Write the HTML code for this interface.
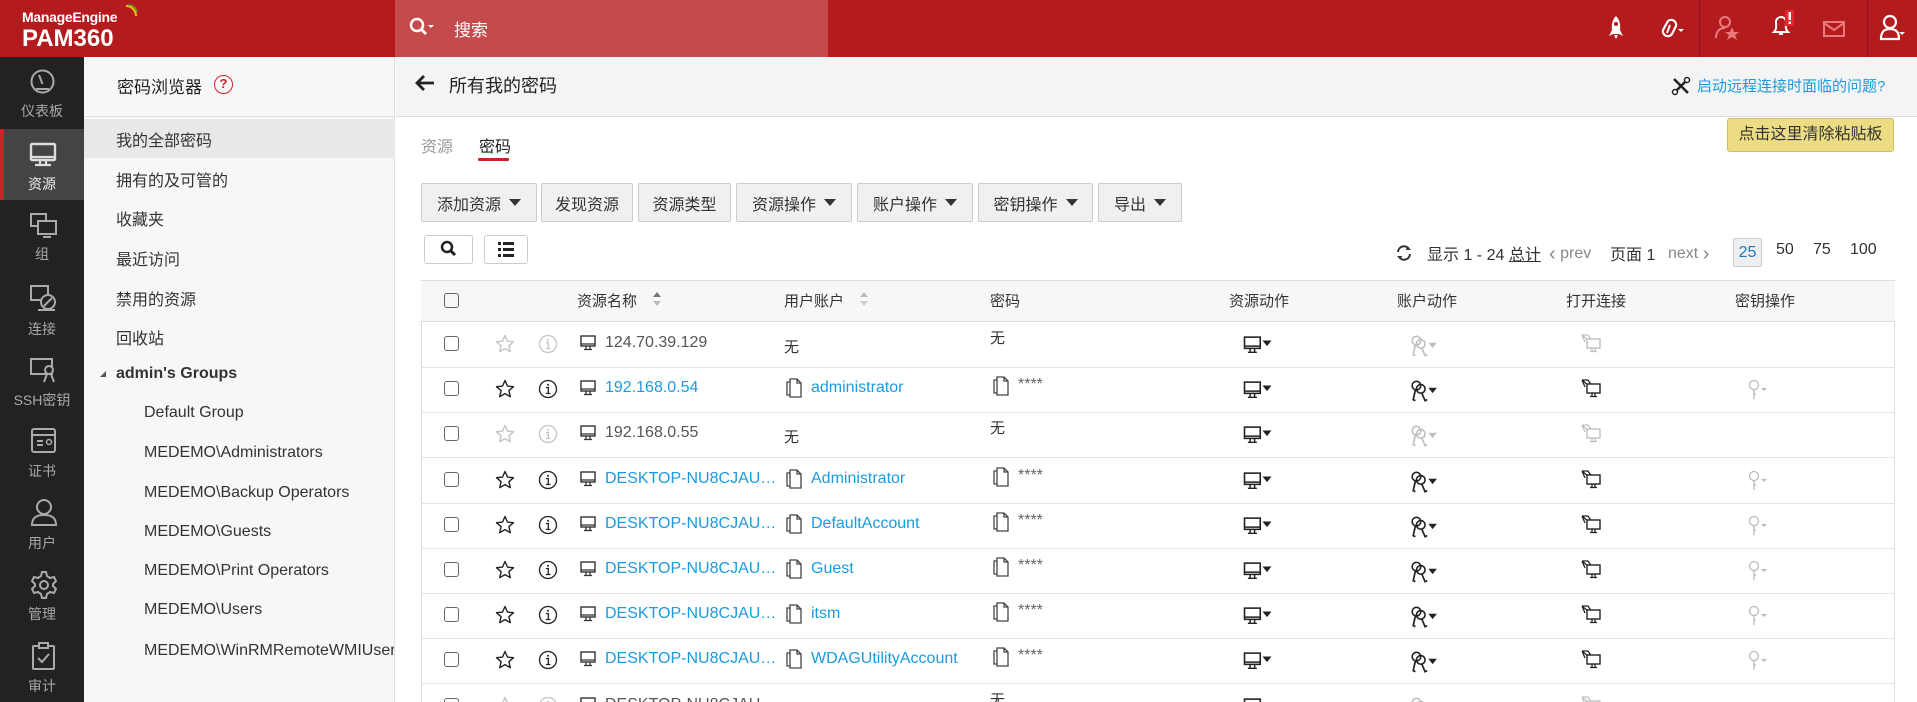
<!DOCTYPE html>
<html style="width:1917px;height:702px;overflow:hidden"><head><meta charset="utf-8">
<style>
*{margin:0;padding:0;box-sizing:border-box}
html,body{overflow:hidden}
body{width:1917px;height:702px;overflow:hidden;position:relative;background:#fff;font-family:"Liberation Sans","Noto Sans CJK SC",sans-serif;color:#333;font-size:16px}
.a{position:absolute;white-space:nowrap}
.hdr{left:0;top:0;width:1917px;height:57px;background:#b41b1e}
.rail{left:0;top:57px;width:84px;height:645px;background:#222}
.nav{left:84px;top:57px;width:311px;height:645px;background:#f7f7f7;border-right:1px solid #ddd}
.rl{color:#a8a8a8;font-size:14px;width:84px;text-align:center;left:0}
.ni{left:116px;font-size:16px;color:#333}
.gi{left:144px;font-size:16px;color:#333}
.btn{top:183px;height:39px;background:#f0f0f0;border:1px solid #ccc;border-radius:2px;font-size:16px;color:#333;display:flex;align-items:center;justify-content:center;gap:8px}
.tri{width:0;height:0;border-left:6px solid transparent;border-right:6px solid transparent;border-top:7px solid #333;display:inline-block}
.th{top:290px;font-size:15px;color:#333}
.link{color:#1a9be0}
.cb{width:15px;height:15px;border:1px solid #666;border-radius:3px;left:444px}
.hl{left:421px;width:1474px;height:1px;background:#e4e4e4}
</style></head><body>
<div style="position:absolute;left:0;top:0;width:1917px;height:702px;overflow:hidden">
<!-- header -->
<div class="a hdr"></div>
<div class="a" style="left:22px;top:9px;color:#fff;font-size:14px;font-weight:bold;letter-spacing:-0.3px">ManageEngine</div>
<svg class="a" style="left:124px;top:4px" width="14" height="14"><path d="M2 2 A10 10 0 0 1 12 12" stroke="#f5c400" stroke-width="2" fill="none"/><path d="M4 1 A9 9 0 0 1 13 8" stroke="#5aa02c" stroke-width="1.5" fill="none"/></svg>
<div class="a" style="left:22px;top:25px;color:#fff;font-size:24px;font-weight:bold">PAM360</div>
<div class="a" style="left:395px;top:0;width:433px;height:57px;background:#c54a4c"></div>
<svg class="a" style="left:409px;top:17px" width="26" height="22"><circle cx="8" cy="8" r="6" stroke="#fff" stroke-width="2.5" fill="none"/><path d="M12 12 L17 17" stroke="#fff" stroke-width="3"/><path d="M19 8 h6 l-3 3z" fill="#fff"/></svg>
<div class="a" style="left:454px;top:16px;color:#fff;font-size:17px">搜索</div>
<svg class="a" style="left:1606px;top:15px" width="20" height="26"><path d="M10 1 C15 6 15 14 13 19 H7 C5 14 5 6 10 1z" fill="#fff"/><circle cx="10" cy="9" r="2" fill="#b41b1e"/><path d="M6 15 L3 21 L7 19z M14 15 L17 21 L13 19z" fill="#fff"/><path d="M8 20 h4 l-2 4z" fill="#fff"/></svg>
<svg class="a" style="left:1658px;top:15px" width="28" height="28"><path d="M10 6 a5 5 0 0 1 8 5 l-4 8 a5 5 0 0 1-9-4z" stroke="#fff" stroke-width="2.2" fill="none"/><path d="M12 10 l-3 8" stroke="#fff" stroke-width="2"/><path d="M20 14 h6 l-3 3z" fill="#fff"/></svg>
<div class="a" style="left:1699px;top:0;width:1px;height:57px;background:#8e1416"></div>
<svg class="a" style="left:1714px;top:14px" width="26" height="28"><circle cx="11" cy="8" r="5" stroke="#e97a7b" stroke-width="2" fill="none"/><path d="M2 24 c0-7 4-10 9-10" stroke="#e97a7b" stroke-width="2" fill="none"/><path d="M18 13 l2 5 5 0-4 3 2 5-5-3-5 3 2-5-4-3 5 0z" fill="#e97a7b"/></svg>
<svg class="a" style="left:1770px;top:10px" width="26" height="30"><path d="M4 22 c3-3 2-6 2-10 a5 5 0 0 1 10 0 c0 4-1 7 2 10z" stroke="#fff" stroke-width="2" fill="none"/><path d="M9 24 h4" stroke="#fff" stroke-width="2"/><rect x="15" y="0" width="9" height="16" fill="#e8262a"/><rect x="18.5" y="2" width="2.5" height="8" fill="#fff"/><rect x="18.5" y="11.5" width="2.5" height="2.5" fill="#fff"/></svg>
<svg class="a" style="left:1823px;top:21px" width="22" height="16"><rect x="1" y="1" width="20" height="14" stroke="#e97a7b" stroke-width="2" fill="none"/><path d="M1 2 L11 9 L21 2" stroke="#e97a7b" stroke-width="2" fill="none"/></svg>
<div class="a" style="left:1867px;top:0;width:1px;height:57px;background:#8e1416"></div>
<svg class="a" style="left:1879px;top:14px" width="28" height="28"><circle cx="11" cy="8" r="6" stroke="#fff" stroke-width="2.2" fill="none"/><path d="M2 25 c0-7 3-10 9-10 s9 3 9 10z" stroke="#fff" stroke-width="2.2" fill="none"/><path d="M20 18 h6 l-3 3z" fill="#fff"/></svg>

<!-- rail -->
<div class="a rail"></div>
<div class="a" style="left:0;top:129px;width:84px;height:71px;background:#444"></div>
<div class="a" style="left:0;top:129px;width:4px;height:71px;background:#c8252a"></div>
<svg class="a" style="left:29px;top:68px" width="27" height="27"><circle cx="13.5" cy="13.5" r="11" stroke="#aaa" stroke-width="2" fill="none"/><path d="M10 7 L13.5 16" stroke="#aaa" stroke-width="2"/><path d="M7 21 h13" stroke="#aaa" stroke-width="2"/></svg>
<div class="a rl" style="top:101px">仪表板</div>
<svg class="a" style="left:29px;top:142px" width="28" height="26"><rect x="2" y="2" width="24" height="16" rx="1" stroke="#ddd" stroke-width="2.4" fill="none"/><path d="M2 15 h24 M11 18 v4 M17 18 v4 M6 23 h16" stroke="#ddd" stroke-width="2.2"/></svg>
<div class="a rl" style="top:174px;color:#eee">资源</div>
<svg class="a" style="left:29px;top:212px" width="30" height="30"><rect x="2" y="2" width="15" height="12" stroke="#aaa" stroke-width="2" fill="none"/><rect x="9" y="9" width="18" height="13" stroke="#aaa" stroke-width="2" fill="#222"/><path d="M14 25 h8" stroke="#aaa" stroke-width="2"/></svg>
<div class="a rl" style="top:244px">组</div>
<svg class="a" style="left:29px;top:284px" width="30" height="30"><rect x="2" y="2" width="17" height="14" stroke="#aaa" stroke-width="2" fill="none"/><circle cx="19" cy="18" r="7" stroke="#aaa" stroke-width="2" fill="#222"/><path d="M15 22 L23 14 M9 26 h17" stroke="#aaa" stroke-width="2"/></svg>
<div class="a rl" style="top:319px">连接</div>
<svg class="a" style="left:29px;top:357px" width="30" height="28"><rect x="2" y="2" width="21" height="15" stroke="#aaa" stroke-width="2" fill="none"/><circle cx="20" cy="13" r="4" stroke="#aaa" stroke-width="2" fill="#222"/><path d="M18 17 l-3 8 M22 17 l3 8" stroke="#aaa" stroke-width="2"/></svg>
<div class="a rl" style="top:390px">SSH密钥</div>
<svg class="a" style="left:29px;top:427px" width="30" height="28"><rect x="3" y="2" width="23" height="23" rx="2" stroke="#aaa" stroke-width="2" fill="none"/><path d="M3 8 h23 M8 14 h6 M8 18 h6" stroke="#aaa" stroke-width="2"/><circle cx="20" cy="15" r="2.5" stroke="#aaa" stroke-width="1.5" fill="none"/></svg>
<div class="a rl" style="top:461px">证书</div>
<svg class="a" style="left:29px;top:498px" width="30" height="30"><circle cx="15" cy="9" r="7" stroke="#aaa" stroke-width="2" fill="none"/><path d="M3 27 c0-7 4-10 12-10 s12 3 12 10z" stroke="#aaa" stroke-width="2" fill="none"/></svg>
<div class="a rl" style="top:533px">用户</div>
<svg class="a" style="left:29px;top:570px" width="30" height="30"><circle cx="15" cy="15" r="4" stroke="#aaa" stroke-width="2" fill="none"/><path d="M13 2h4l1 4 3 2 4-1 2 4-3 3v2l3 3-2 4-4-1-3 2-1 4h-4l-1-4-3-2-4 1-2-4 3-3v-2l-3-3 2-4 4 1 3-2z" stroke="#aaa" stroke-width="2" fill="none"/></svg>
<div class="a rl" style="top:604px">管理</div>
<svg class="a" style="left:31px;top:642px" width="26" height="30"><rect x="2" y="4" width="21" height="23" rx="1" stroke="#aaa" stroke-width="2" fill="none"/><rect x="8" y="1" width="9" height="5" stroke="#aaa" stroke-width="2" fill="#222"/><path d="M7 16 l4 4 7-8" stroke="#aaa" stroke-width="2" fill="none"/></svg>
<div class="a rl" style="top:676px">审计</div>

<!-- nav panel -->
<div class="a nav"></div>
<div class="a" style="left:84px;top:116px;width:311px;height:1px;background:#ddd"></div>
<div class="a" style="left:117px;top:73px;font-size:17px;color:#222">密码浏览器</div>
<div class="a" style="left:214px;top:75px;width:19px;height:19px;border:1.5px solid #c8252a;border-radius:50%;color:#c8252a;font-size:13px;font-weight:bold;text-align:center;line-height:16px">?</div>
<div class="a" style="left:84px;top:119px;width:311px;height:39px;background:#e8e8e8"></div>
<div class="a ni" style="top:127px">我的全部密码</div>
<div class="a ni" style="top:167px">拥有的及可管的</div>
<div class="a ni" style="top:206px">收藏夹</div>
<div class="a ni" style="top:246px">最近访问</div>
<div class="a ni" style="top:286px">禁用的资源</div>
<div class="a ni" style="top:325px">回收站</div>
<div class="a" style="left:100px;top:371px;width:0;height:0;border-left:6px solid transparent;border-bottom:6px solid #555"></div>
<div class="a ni" style="top:365px;font-weight:bold">admin's Groups</div>
<div class="a gi" style="top:404px">Default Group</div>
<div class="a gi" style="top:444px">MEDEMO\Administrators</div>
<div class="a gi" style="top:484px">MEDEMO\Backup Operators</div>
<div class="a gi" style="top:523px">MEDEMO\Guests</div>
<div class="a gi" style="top:562px">MEDEMO\Print Operators</div>
<div class="a gi" style="top:601px">MEDEMO\Users</div>
<div class="a gi" style="top:642px;width:250px;overflow:hidden">MEDEMO\WinRMRemoteWMIUsers</div>

<!-- subheader -->
<div class="a" style="left:396px;top:57px;width:1521px;height:60px;background:#f4f4f4;border-bottom:1px solid #ddd"></div>
<svg class="a" style="left:414px;top:73px" width="22" height="20"><path d="M20 10 H3 M10 3 L3 10 L10 17" stroke="#222" stroke-width="2.8" fill="none"/></svg>
<div class="a" style="left:449px;top:72px;font-size:18px;color:#222">所有我的密码</div>
<svg class="a" style="left:1671px;top:76px" width="20" height="20"><path d="M3 3 L17 17 M17 3 L3 17" stroke="#222" stroke-width="2.5"/><circle cx="4" cy="16" r="2.5" stroke="#222" stroke-width="1.5" fill="#fff"/><circle cx="16" cy="4" r="2.5" stroke="#222" stroke-width="1.5" fill="#fff"/></svg>
<div class="a" style="left:1697px;top:75px;font-size:15px;color:#1a9be0">启动远程连接时面临的问题?</div>

<!-- tabs -->
<div class="a" style="left:421px;top:133px;font-size:16px;color:#999">资源</div>
<div class="a" style="left:479px;top:133px;font-size:16px;color:#222">密码</div>
<div class="a" style="left:478px;top:158px;width:31px;height:3px;background:#c8252a;border-radius:1px"></div>
<div class="a" style="left:1727px;top:118px;width:167px;height:34px;background:#ecdd85;border:1px solid #cdbd63;border-radius:3px;font-size:16px;color:#333;text-align:center;line-height:32px">点击这里清除粘贴板</div>

<!-- buttons -->
<div class="a btn" style="left:421px;width:116px">添加资源 <span class="tri"></span></div>
<div class="a btn" style="left:541px;width:92px">发现资源</div>
<div class="a btn" style="left:638px;width:93px">资源类型</div>
<div class="a btn" style="left:736px;width:116px">资源操作 <span class="tri"></span></div>
<div class="a btn" style="left:857px;width:116px">账户操作 <span class="tri"></span></div>
<div class="a btn" style="left:978px;width:115px">密钥操作 <span class="tri"></span></div>
<div class="a btn" style="left:1098px;width:84px">导出 <span class="tri"></span></div>
<div class="a" style="left:424px;top:235px;width:49px;height:29px;border:1px solid #ccc;border-radius:3px;background:#fff"></div>
<svg class="a" style="left:440px;top:240px" width="18" height="18"><circle cx="7" cy="7" r="5" stroke="#222" stroke-width="2.5" fill="none"/><path d="M10 10 L15 15" stroke="#222" stroke-width="3"/></svg>
<div class="a" style="left:484px;top:235px;width:44px;height:29px;border:1px solid #ccc;border-radius:3px;background:#fff"></div>
<svg class="a" style="left:498px;top:242px" width="16" height="15"><rect x="0" y="0" width="3" height="3" fill="#222"/><rect x="5" y="0" width="11" height="3" fill="#222"/><rect x="0" y="6" width="3" height="3" fill="#222"/><rect x="5" y="6" width="11" height="3" fill="#222"/><rect x="0" y="12" width="3" height="3" fill="#222"/><rect x="5" y="12" width="11" height="3" fill="#222"/></svg>

<!-- pagination -->
<svg class="a" style="left:1395px;top:244px" width="18" height="18"><path d="M3 8 A6 6 0 0 1 14 5 M15 10 A6 6 0 0 1 4 13" stroke="#333" stroke-width="2" fill="none"/><path d="M12 2 l4 4 -5 0z M6 16 l-4-4 5 0z" fill="#333"/></svg>
<div class="a" style="left:1427px;top:241px;font-size:16px;color:#333">显示 1 - 24 <span style="text-decoration:underline">总计</span></div>
<div class="a" style="left:1549px;top:241px;font-size:16px;color:#888"><span style="font-size:20px;position:relative;top:2px">‹</span> prev</div>
<div class="a" style="left:1610px;top:241px;font-size:16px;color:#333">页面 1</div>
<div class="a" style="left:1668px;top:241px;font-size:16px;color:#888">next <span style="font-size:20px;position:relative;top:2px">›</span></div>
<div class="a" style="left:1733px;top:238px;width:29px;height:29px;background:#eee;border:1px solid #ccc;border-radius:2px;color:#1a7bbf;font-size:16px;text-align:center;line-height:27px">25</div>
<div class="a" style="left:1776px;top:241px;font-size:16px">50</div>
<div class="a" style="left:1813px;top:241px;font-size:16px">75</div>
<div class="a" style="left:1850px;top:241px;font-size:16px">100</div>

<!-- table -->
<div class="a" style="left:421px;top:280px;width:1474px;height:422px;border-left:1px solid #ddd;border-right:1px solid #ddd"></div>
<div class="a" style="left:421px;top:280px;width:1474px;height:42px;background:#f7f7f7;border-top:1px solid #ddd;border-bottom:1px solid #ddd"></div>
<div class="a cb" style="top:293px"></div>
<div class="a th" style="left:577px">资源名称</div>
<svg class="a" style="left:653px;top:292px" width="8" height="14"><path d="M0 5 L4 0 L8 5z" fill="#777"/><path d="M0 9 L4 14 L8 9z" fill="#bbb"/></svg>
<div class="a th" style="left:784px">用户账户</div>
<svg class="a" style="left:860px;top:292px" width="8" height="14"><path d="M0 5 L4 0 L8 5z" fill="#bbb"/><path d="M0 9 L4 14 L8 9z" fill="#ccc"/></svg>
<div class="a th" style="left:990px">密码</div>
<div class="a th" style="left:1229px">资源动作</div>
<div class="a th" style="left:1397px">账户动作</div>
<div class="a th" style="left:1566px">打开连接</div>
<div class="a th" style="left:1735px">密钥操作</div>

<svg width="0" height="0" style="position:absolute">
<defs>
<symbol id="mon" viewBox="0 0 16 16"><rect x="1" y="1" width="14" height="10" stroke="currentColor" stroke-width="1.4" fill="none"/><path d="M1 9 h14 M6 11 v3 M10 11 v3 M4 14.5 h8" stroke="currentColor" stroke-width="1.3"/></symbol>
<symbol id="star" viewBox="0 0 20 20"><path d="M10 1.5 l2.5 5.6 6 .6-4.6 4 1.4 6-5.3-3.1-5.3 3.1 1.4-6-4.6-4 6-.6z" stroke="currentColor" stroke-width="1.4" fill="none" stroke-linejoin="round"/></symbol>
<symbol id="info" viewBox="0 0 20 20"><circle cx="10" cy="10" r="8.5" stroke="currentColor" stroke-width="1.3" fill="none"/><path d="M8 8.5 h2.3 v6 M8 14.5 h4.5" stroke="currentColor" stroke-width="1.3" fill="none"/><circle cx="10" cy="5.7" r="1" fill="currentColor"/></symbol>
<symbol id="copy" viewBox="0 0 16 20"><path d="M4 3 V1 h7 l4 4 v14 H4z M11 1 v4 h4" stroke="currentColor" stroke-width="1.3" fill="none"/><path d="M4 4 H1 v13 h3" stroke="currentColor" stroke-width="1.3" fill="none"/></symbol>
<symbol id="keys" viewBox="0 0 26 20"><circle cx="6" cy="5" r="4" stroke="currentColor" stroke-width="1.5" fill="none"/><circle cx="10" cy="8" r="4" stroke="currentColor" stroke-width="1.5" fill="none"/><path d="M5 9 L3 18 L5 19 M11 12 L14 19 L16 18" stroke="currentColor" stroke-width="1.6" fill="none"/><path d="M17 7 h8 l-4 5z" fill="currentColor"/></symbol>
<symbol id="conn" viewBox="0 0 22 20"><path d="M2 2 L8 2 L12 8 M2 2 L5 9 M2 2 L9 8" stroke="currentColor" stroke-width="1.3" fill="none"/><rect x="7" y="6" width="13" height="9" stroke="currentColor" stroke-width="1.4" fill="#fff"/><path d="M12 15 v3 M15 15 v3 M10 18.5 h7" stroke="currentColor" stroke-width="1.3"/></symbol>
<symbol id="ract" viewBox="0 0 26 16"><rect x="1" y="1" width="14" height="10" stroke="currentColor" stroke-width="1.4" fill="none"/><path d="M1 9 h14 M6 11 v3 M10 11 v3 M4 14.5 h8" stroke="currentColor" stroke-width="1.3"/><path d="M17 4 h8 l-4 5z" fill="currentColor"/></symbol>
<symbol id="pk" viewBox="0 0 20 22"><circle cx="6" cy="6" r="4.5" stroke="currentColor" stroke-width="1.3" fill="none"/><path d="M6 10 v10 M6 15 h2" stroke="currentColor" stroke-width="1.3"/><path d="M13 9 h6 l-3 3z" fill="currentColor"/></symbol>
</defs></svg>

<div id="rows"></div>
</div>
<script>
var rows=[
["124.70.39.129",0,"无","无",0],
["192.168.0.54",1,"administrator","****",1],
["192.168.0.55",0,"无","无",0],
["DESKTOP-NU8CJAU…",1,"Administrator","****",1],
["DESKTOP-NU8CJAU…",1,"DefaultAccount","****",1],
["DESKTOP-NU8CJAU…",1,"Guest","****",1],
["DESKTOP-NU8CJAU…",1,"itsm","****",1],
["DESKTOP-NU8CJAU…",1,"WDAGUtilityAccount","****",1],
["DESKTOP-NU8CJAU…",0,"无","无",0]
];
var h="";
for(var i=0;i<rows.length;i++){
 var r=rows[i],t=322+i*45.2,c=t+22;
 var on=r[4], g=on?"#222":"#c4c4c4";
 h+='<div class="a hl" style="top:'+Math.round(t+45)+'px"></div>';
 h+='<div class="a cb" style="top:'+Math.round(c-8)+'px"></div>';
 h+='<svg class="a" style="left:495px;top:'+Math.round(c-10)+'px;color:'+g+'" width="20" height="20"><use href="#star"/></svg>';
 h+='<svg class="a" style="left:538px;top:'+Math.round(c-10)+'px;color:'+(on?'#222':'#c4c4c4')+'" width="20" height="20"><use href="#info"/></svg>';
 h+='<svg class="a" style="left:580px;top:'+Math.round(c-9)+'px;color:#333" width="16" height="16"><use href="#mon"/></svg>';
 h+='<div class="a'+(on?' link':'')+'" style="left:605px;top:'+Math.round(c-10)+'px;font-size:16px;color:'+(on?'#1a9be0':'#555')+'">'+r[0]+'</div>';
 if(on){
  h+='<svg class="a" style="left:786px;top:'+Math.round(c-11)+'px;color:#444" width="16" height="20"><use href="#copy"/></svg>';
  h+='<div class="a link" style="left:811px;top:'+Math.round(c-10)+'px;font-size:16px">'+r[2]+'</div>';
  h+='<svg class="a" style="left:993px;top:'+Math.round(c-13)+'px;color:#444" width="16" height="20"><use href="#copy"/></svg>';
  h+='<div class="a" style="left:1018px;top:'+Math.round(c-13)+'px;font-size:16px;color:#666">****</div>';
 } else {
  h+='<div class="a" style="left:784px;top:'+Math.round(c-8)+'px;font-size:15px;color:#333">无</div>';
  h+='<div class="a" style="left:990px;top:'+Math.round(c-17)+'px;font-size:15px;color:#333">无</div>';
 }
 h+='<svg class="a" style="left:1243px;top:'+Math.round(c-8)+'px;color:#222" width="30" height="18"><use href="#ract"/></svg>';
 h+='<svg class="a" style="left:1410px;top:'+Math.round(c-9)+'px;color:'+(on?'#222':'#c0c0c0')+'" width="28" height="22"><use href="#keys"/></svg>';
 h+='<svg class="a" style="left:1580px;top:'+Math.round(c-11)+'px;color:'+(on?'#222':'#c0c0c0')+'" width="22" height="20"><use href="#conn"/></svg>';
 if(on) h+='<svg class="a" style="left:1748px;top:'+Math.round(c-10)+'px;color:#bbb" width="20" height="22"><use href="#pk"/></svg>';
}
document.getElementById("rows").innerHTML=h;
</script>
</body></html>
